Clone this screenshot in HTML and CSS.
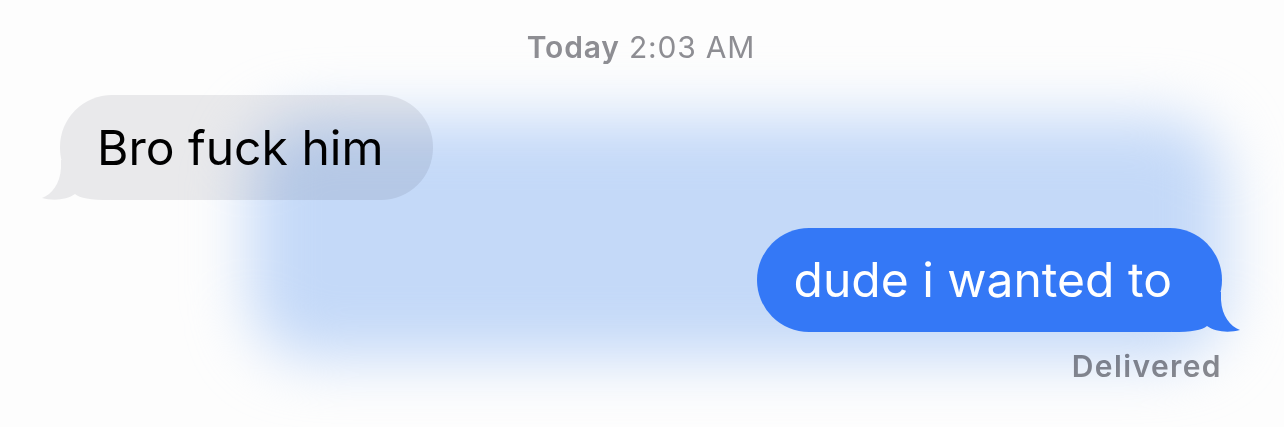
FILE: index.html
```html
<!DOCTYPE html>
<html lang="en">

<head>
    <meta charset="UTF-8">
    <meta name="viewport" content="width=device-width, initial-scale=1.0">
    <title>Messages</title>
    <link rel="stylesheet" href="styles.css">
</head>

<body>
    <div class="thread">
        <div class="stamp"><b>Today</b> 2:03 AM</div>

        <div class="row">
            <div class="bubble received">
                Bro fuck him
                <svg class="tail" width="70" height="40" viewBox="0 0 70 40">
                    <path d="M0 40 C20 40 30 38 35 34 C43 40 57 41 68 38 C58 34 50 24 49 8 L49 0 L0 0 Z" />
                </svg>
            </div>
        </div>

        <!-- soft highlight behind the sent message -->
        <div class="glow"></div>

        <div class="row sent-row">
            <div class="bubble sent">
                dude i wanted to
                <svg class="tail" width="70" height="40" viewBox="0 0 70 40">
                    <path d="M0 40 C20 40 30 38 35 34 C43 40 57 41 68 38 C58 34 50 24 49 8 L49 0 L0 0 Z" />
                </svg>
            </div>
        </div>

        <div class="status">Delivered</div>
    </div>
</body>

</html>
```

FILE: styles.css
```css
html,
body {
    margin: 0;
    background-color: #fdfdfd;
    overflow: hidden;
}

body {
    font-family: Inter, "Noto Sans", sans-serif;
}

.thread {
    position: relative;
    isolation: isolate;
    box-sizing: border-box;
    min-height: 100vh;
    background-color: #fdfdfd;
    padding: 30px 62px 0 60px;
    display: flex;
    flex-direction: column;
}

.stamp {
    text-align: center;
    font-size: 30px;
    line-height: 34px;
    letter-spacing: 0.8px;
    color: #8e8e93;
    margin-bottom: 31px;
}

.stamp b {
    font-weight: 600;
}

.row {
    display: flex;
}

.sent-row {
    justify-content: flex-end;
    margin-top: 28px;
}

.bubble {
    position: relative;
    z-index: 1;
    height: 105px;
    line-height: 105px;
    font-size: 48px;
    border-radius: 52px;
    padding: 0 50px 0 37px;
}

/* tail sits under the text but over the bubble fill */
.tail {
    position: absolute;
    z-index: -1;
    bottom: 0;
}

.received {
    background-color: #e9e9eb;
    color: #000;
}

.received .tail {
    left: -20px;
    transform: scaleX(-1);
    fill: #e9e9eb;
}

.sent {
    z-index: 3;
    height: 104px;
    line-height: 104px;
    padding: 0 50px 0 37px;
    background-color: #3478f6;
    color: #fff;
}

.sent .tail {
    right: -20px;
    fill: #3478f6;
}

.glow {
    position: absolute;
    z-index: 2;
    left: 250px;
    top: 118px;
    width: 975px;
    height: 240px;
    border-radius: 60px;
    background-color: #c6dbfa;
    filter: blur(30px);
    mix-blend-mode: multiply;
}

.status {
    align-self: flex-end;
    margin-top: 17px;
    font-size: 30px;
    line-height: 34px;
    letter-spacing: 1.4px;
    font-weight: 600;
    color: #8a8a8f;
}
```
